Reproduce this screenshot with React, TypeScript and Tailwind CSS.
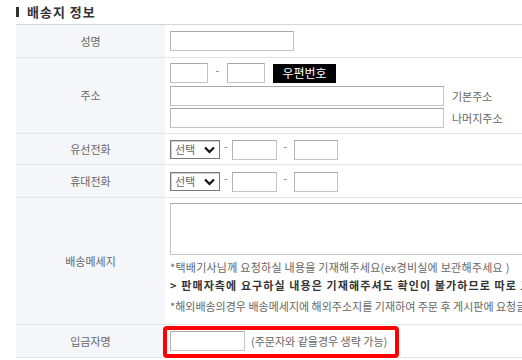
import React from "react";

const inputCls = "block h-[20px] bg-white border border-[#c4c4c4] border-t-[#a8a8a8] border-l-[#b4b4b4]";

function Select() {
  return (
    <div className="flex h-[19px] w-[50px] items-center justify-between border border-[#7a7a7a] bg-white pl-[4px] pr-[4px] shadow-[inset_1px_1px_0_#cfcfcf]">
      <span className="text-[11px] leading-none text-[#666]">선택</span>
      <svg width="11" height="8" viewBox="0 0 11 8" className="mt-[1px]">
        <path d="M1 1.5 L5.5 6 L10 1.5" fill="none" stroke="#111" strokeWidth="2.2" />
      </svg>
    </div>
  );
}

function Dash() {
  return <span className="w-[12px] self-start text-center text-[11px] leading-[12px] text-[#777]">-</span>;
}

function Row({ label, h, children, align = "items-center" }: { label: string; h: string; children: React.ReactNode; align?: string }) {
  return (
    <div className={`flex border-b border-[#e4e4e4] ${h}`}>
      <div className="flex w-[149px] shrink-0 items-center justify-center bg-[#f5f6f9] text-[11px] text-[#666]">{label}</div>
      <div className={`flex flex-1 pl-[5px] ${align}`}>{children}</div>
    </div>
  );
}

export default function App() {
  return (
    <div className="relative h-[360px] w-[522px] overflow-hidden bg-white font-['Noto_Sans_CJK_KR','Noto_Sans',sans-serif]">
      <div className="flex h-[24px] items-center pl-[16px]">
        <span className="mr-[8px] h-[10px] w-[3px] bg-[#333]" />
        <span className="text-[13px] font-bold tracking-[1px] text-[#333]">배송지 정보</span>
      </div>
      <div className="ml-[16px] w-[640px] border-t border-[#d6d6d6]">
        <Row label="성명" h="h-[33px]">
          <input className={`${inputCls} w-[124px]`} />
        </Row>
        <Row label="주소" h="h-[76px]" align="items-start">
          <div className="flex flex-col pt-[5px]">
            <div className="flex items-center">
              <input className={`${inputCls} w-[38px]`} />
              <span className="w-[19px] self-start pt-[1px] text-center text-[11px] leading-[12px] text-[#777]">-</span>
              <input className={`${inputCls} w-[38px]`} />
              <span className="ml-[8px] flex h-[19px] w-[63px] items-center justify-center bg-black text-[12px] text-white">우편번호</span>
            </div>
            <div className="mt-[3px] flex items-center">
              <input className={`${inputCls} w-[274px]`} />
              <span className="ml-[8px] text-[11px] text-[#666]">기본주소</span>
            </div>
            <div className="mt-[2px] flex items-center">
              <input className={`${inputCls} w-[274px]`} />
              <span className="ml-[8px] text-[11px] text-[#666]">나머지주소</span>
            </div>
          </div>
        </Row>
        <Row label="유선전화" h="h-[31px]">
          <div className="flex h-[19px] items-start">
            <Select />
            <Dash />
            <input className={`${inputCls} h-[19px] w-[45px]`} />
            <span className="w-[17px] text-center text-[11px] leading-[12px] text-[#777]">-</span>
            <input className={`${inputCls} h-[19px] w-[44px]`} />
          </div>
        </Row>
        <Row label="휴대전화" h="h-[33px]">
          <div className="flex h-[19px] items-start">
            <Select />
            <Dash />
            <input className={`${inputCls} h-[19px] w-[45px]`} />
            <span className="w-[17px] text-center text-[11px] leading-[12px] text-[#777]">-</span>
            <input className={`${inputCls} h-[19px] w-[44px]`} />
          </div>
        </Row>
        <Row label="배송메세지" h="h-[127px]" align="items-start">
          <div className="flex flex-col whitespace-nowrap pt-[5px]">
            <textarea className="block h-[52px] w-[420px] resize-none border border-[#c4c4c4] border-t-[#a8a8a8] bg-white" />
            <p className="mt-[3px] text-[11px] leading-[18px] tracking-[0.25px] text-[#666]">*택배기사님께 요청하실 내용을 기재해주세요(ex경비실에 보관해주세요 )</p>
            <p className="text-[11px] font-bold leading-[18px] tracking-[1.1px] text-[#333]">&gt; 판매자측에 요구하실 내용은 기재해주셔도 확인이 불가하므로 따로 고객센터로 문의해주세요</p>
            <p className="mt-[3px] text-[11px] leading-[18px] text-[#666]">*해외배송의경우 배송메세지에 해외주소지를 기재하여 주문 후 게시판에 요청글을 남겨주세요</p>
          </div>
        </Row>
        <Row label="입금자명" h="h-[33px]">
          <input className={`${inputCls} w-[75px]`} />
          <span className="ml-[6px] text-[11px] text-[#666]">(주문자와 같을경우 생략 가능)</span>
        </Row>
      </div>
      <div className="pointer-events-none absolute left-[163px] top-[326px] h-[32px] w-[236px] rounded-[4px] border-[4px] border-[#ff0000]" />
    </div>
  );
}
